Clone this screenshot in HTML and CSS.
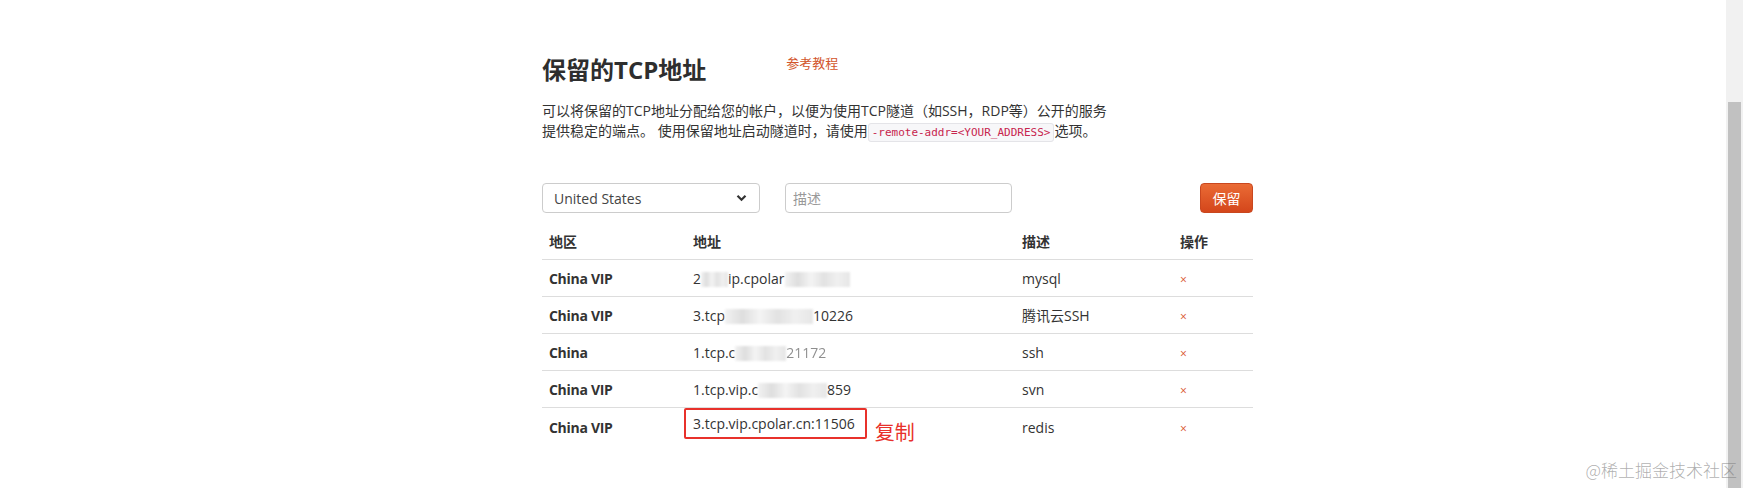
FILE: index.html
```html
<!DOCTYPE html>
<html>
<head>
 <meta charset="UTF-8">
 <title>保留的TCP地址</title>

 <link rel="stylesheet" href="styles.css">
</head>
<body>

<div class="page">
  <div class="container">
    <div class="title-row">
      <h1 class="title">保留的TCP地址</h1>
      <a class="guide">参考教程</a>
    </div>
    <p class="desc">可以将保留的TCP地址分配给您的帐户，以便为使用TCP隧道（如SSH，RDP等）公开的服务<br>提供稳定的端点。 使用保留地址启动隧道时，请使用<code>-remote-addr=&lt;YOUR_ADDRESS&gt;</code>选项。</p>

    <div class="controls">
      <div class="select">
        <span>United States</span>
        <svg width="11" height="8" viewBox="0 0 11 8"><path d="M1.5 1.8 L5.5 5.8 L9.5 1.8" fill="none" stroke="#333" stroke-width="2.2"/></svg>
      </div>
      <input type="text" class="desc-input" placeholder="描述">
      <button type="submit" class="btn-save">保留</button>
    </div>

    <table class="addr-table">
      <colgroup>
        <col class="c-region">
        <col class="c-addr">
        <col class="c-desc">
        <col class="c-op">
      </colgroup>
      <thead>
        <tr><th>地区</th><th>地址</th><th>描述</th><th>操作</th></tr>
      </thead>
      <tbody>
        <tr>
          <td class="region">China VIP</td>
          <td>2<span class="mask m1"></span>ip.cpolar<span class="mask m2"></span></td>
          <td>mysql</td>
          <td><a class="del">×</a></td>
        </tr>
        <tr>
          <td class="region">China VIP</td>
          <td>3.tcp<span class="mask m3"></span>10226</td>
          <td>腾讯云SSH</td>
          <td><a class="del">×</a></td>
        </tr>
        <tr>
          <td class="region">China</td>
          <td>1.tcp.c<span class="mask m4"></span><span class="faded">21172</span></td>
          <td>ssh</td>
          <td><a class="del">×</a></td>
        </tr>
        <tr>
          <td class="region">China VIP</td>
          <td>1.tcp.vip.c<span class="mask m5"></span>859</td>
          <td>svn</td>
          <td><a class="del">×</a></td>
        </tr>
        <tr>
          <td class="region">China VIP</td>
          <td><span class="copy-box">3.tcp.vip.cpolar.cn:11506</span><span class="copy-note">复制</span></td>
          <td>redis</td>
          <td><a class="del">×</a></td>
        </tr>
      </tbody>
    </table>
  </div>
</div>

<div class="scrollbar">
  <div class="thumb"></div>
</div>

<div class="watermark">@稀土掘金技术社区</div>

</body>
</html>
```

FILE: styles.css
```css
html, body {
  margin: 0;
  height: 100%;
}
body {
  display: flex;
  background: #fff;
  color: #333;
  font-family: "Open Sans", "Noto Sans CJK SC", sans-serif;
  font-size: 14px;
  overflow: hidden;
}
.page {
  flex: 1;
}
.container {
  width: 711px;
  margin-left: 542px;
  padding-top: 55px;
}
.title-row {
  display: flex;
  align-items: flex-start;
}
.title {
  margin: 0;
  font-size: 24px;
  line-height: 30px;
  font-weight: bold;
  color: #2e2e2e;
}
.guide {
  margin-left: 80px;
  margin-top: 0;
  font-size: 13px;
  line-height: 16px;
  color: #d2542a;
}
.desc {
  margin: 16px 0 0 0;
  line-height: 20px;
  color: #333;
}
.desc code {
  font-family: "DejaVu Sans Mono", "Liberation Mono", monospace;
  font-size: 11px;
  line-height: 13px;
  color: #c7254e;
  background: #f7f7f9;
  border: 1px solid #e4e4e8;
  border-radius: 3px;
  padding: 2px 3px;
}

.controls {
  display: flex;
  align-items: center;
  margin-top: 42px;
  height: 30px;
}
.select {
  box-sizing: border-box;
  width: 218px;
  height: 30px;
  border: 1px solid #ccc;
  border-radius: 4px;
  display: flex;
  align-items: center;
  justify-content: space-between;
  padding: 0 12px 0 11px;
  color: #444;
}
.desc-input {
  box-sizing: border-box;
  width: 227px;
  height: 30px;
  margin-left: 25px;
  border: 1px solid #ccc;
  border-radius: 4px;
  padding: 0 7px;
  font-family: "Open Sans", "Noto Sans CJK SC", sans-serif;
  font-size: 14px;
}
.desc-input::placeholder {
  color: #999;
}
.btn-save {
  margin-left: auto;
  width: 53px;
  height: 30px;
  border: 1px solid #c9471f;
  border-radius: 4px;
  background: linear-gradient(#ea6b35, #d4461b);
  color: #fff;
  font-family: "Open Sans", "Noto Sans CJK SC", sans-serif;
  font-size: 14px;
  padding: 0;
}

.addr-table {
  margin-top: 10px;
  width: 711px;
  border-collapse: collapse;
  table-layout: fixed;
}
.c-region { width: 144px; }
.c-addr { width: 329px; }
.c-desc { width: 158px; }
.c-op { width: 80px; }
.addr-table th {
  text-align: left;
  font-weight: bold;
  height: 36px;
  padding: 0 7px;
  border-bottom: 1px solid #ddd;
}
.addr-table td {
  height: 36px;
  padding: 0 7px;
  border-bottom: 1px solid #ddd;
  white-space: nowrap;
}
.addr-table tbody tr:last-child td {
  border-bottom: none;
}
.region {
  font-weight: bold;
  letter-spacing: -0.3px;
}
.del {
  color: #d9532c;
  font-size: 12px;
}
.mask {
  display: inline-block;
  height: 15px;
  vertical-align: middle;
  background: linear-gradient(90deg, #f2f2f2, #dedede 20%, #f4f4f4 40%, #e2e2e2 60%, #f0f0f0 80%, #e6e6e6);
  filter: blur(1.2px);
}
.m1 { width: 27px; }
.m2 { width: 65px; }
.m3 { width: 88px; }
.m4 { width: 51px; }
.m5 { width: 69px; }
.faded {
  opacity: 0.55;
}
.copy-box {
  display: inline-block;
  margin-left: -9px;
  padding: 4px 10px 4px 7px;
  line-height: 19px;
  border: 2px solid #e8312b;
  border-radius: 2px;
}
.copy-note {
  margin-left: 8px;
  font-size: 20px;
  color: #e8312b;
  vertical-align: -11px;
}

.scrollbar {
  width: 17px;
  background: #f1f1f1;
  padding-top: 102px;
}
.thumb {
  margin-left: 2px;
  width: 13px;
  height: 100%;
  background: #c1c1c1;
}

.watermark {
  position: absolute;
  right: 6px;
  bottom: 6px;
  font-family: "Noto Sans CJK SC", sans-serif;
  font-weight: 300;
  font-size: 17px;
  color: rgba(120, 120, 120, 0.6);
}
```
